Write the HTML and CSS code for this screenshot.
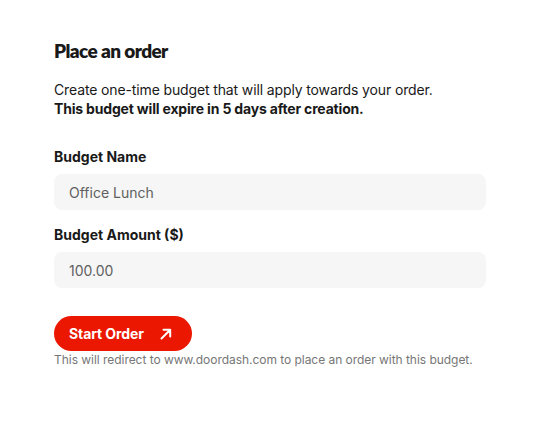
FILE: index.html
```html
<!DOCTYPE html>
<html lang="en">
<head>
<meta charset="utf-8">
<title>Place an order</title>
<link rel="stylesheet" href="styles.css">
</head>
<body>
<main class="panel">
  <h1 class="title">Place an order</h1>
  <p class="intro">Create one-time budget that will apply towards your order.<br><strong>This budget will expire in 5 days after creation.</strong></p>
  <div class="field">
    <label class="label" for="name">Budget Name</label>
    <input class="input" id="name" type="text" value="Office Lunch">
  </div>
  <div class="field">
    <label class="label" for="amount">Budget Amount ($)</label>
    <input class="input" id="amount" type="text" value="100.00">
  </div>
  <div class="actions">
    <button class="btn" type="button">Start Order
      <svg class="btn-icon" viewBox="0 0 14 14" width="14" height="14" aria-hidden="true"><path d="M2.5 11.5 L11 3 M4.5 2.8 H11.2 V9.5" fill="none" stroke="#fff" stroke-width="2" stroke-linecap="round" stroke-linejoin="round"/></svg>
    </button>
    <p class="note">This will redirect to www.doordash.com to place an order with this budget.</p>
  </div>
</main>
</body>
</html>
```
FILE: styles.css
```css
* { box-sizing: border-box; }
html, body { margin: 0; padding: 0; background: #fff; }
body { font-family: "Inter", "Lato", sans-serif; color: #191919; }

.panel {
  width: 486px;
  padding: 39px 0 0 54px;
}

.title {
  margin: 0;
  font-family: "Lato", "Inter", sans-serif;
  font-size: 19px;
  line-height: 24px;
  font-weight: 800;
  letter-spacing: -0.6px;
}

.intro {
  margin: 17px 0 0;
  font-size: 14px;
  line-height: 19px;
  letter-spacing: -0.13px;
}
.intro strong { font-weight: 700; letter-spacing: -0.18px; }

.field {
  display: flex;
  flex-direction: column;
  gap: 7px;
  margin-top: 15px;
}
.intro + .field { margin-top: 29px; }

.label {
  font-size: 14px;
  line-height: 20px;
  font-weight: 700;
}

.input {
  height: 36px;
  width: 100%;
  border: none;
  border-radius: 8px;
  background: #f6f6f6;
  padding: 0 15px;
  font-family: inherit;
  font-size: 14px;
  color: #606060;
  outline: none;
}

.actions { margin-top: 28px; }

.btn {
  display: inline-flex;
  align-items: center;
  gap: 15px;
  height: 35px;
  padding: 0 19px 0 15px;
  border: none;
  border-radius: 18px;
  background: #eb1700;
  color: #fff;
  font-family: inherit;
  font-size: 14px;
  font-weight: 700;
  letter-spacing: -0.1px;
  cursor: pointer;
}
.btn-icon { display: block; }

.note {
  margin: 1px 0 0;
  font-size: 12px;
  line-height: 16px;
  letter-spacing: -0.04px;
  color: #767676;
}
```
